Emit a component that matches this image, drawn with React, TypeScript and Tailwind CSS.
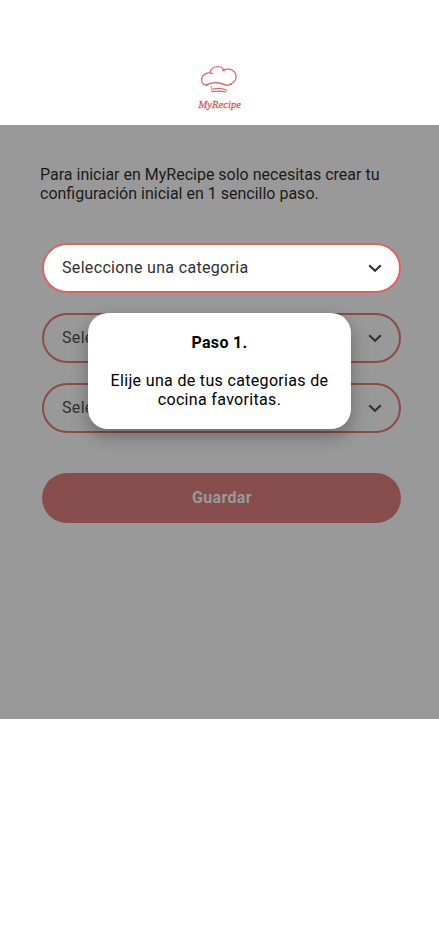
const roboto = "font-['Roboto',sans-serif]";

function Logo() {
  return (
    <svg className="overflow-visible" width="46" height="50" viewBox="0 0 46 50" fill="none" stroke="#df6a6c" strokeLinecap="round" strokeLinejoin="round">
      <path strokeWidth="1.3" d="M15.6 8.6C10.2 6.4 5 9.6 4.6 14.4C4.4 18.4 7.2 20.6 10.4 20" />
      <path strokeWidth="1.2" d="M13.2 7.4C13.6 3.4 17.4 1.4 21 1.5C24.4 1.7 26.6 3.4 27.2 6" />
      <path strokeWidth="1.3" d="M25.6 5.4C29.4 3.4 34.4 3.8 37 6.6C41 11 39 17.4 33 19.2" />
      <path strokeWidth="1.5" d="M9.4 20C14 17 21.6 17.4 26.4 19.2C29.4 20.4 32 20.8 34.4 19" />
      <path strokeWidth="0.9" d="M14 21C14.8 22.6 14.4 24.4 15 26.4" />
      <path strokeWidth="1.2" d="M16 24.1C20.4 22.9 26 23.3 29.6 25.2M15.2 26.6C20 25.8 25 26 28.8 27" />
      <text x="1.5" y="42.6" textLength="42.5" lengthAdjust="spacingAndGlyphs" fill="#d9595c" stroke="#d9595c" strokeWidth="0.3" fontFamily="'Liberation Serif', serif" fontStyle="italic" fontSize="11">MyRecipe</text>
    </svg>
  );
}

function CategorySelect({ active = false }: { active?: boolean }) {
  return (
    <button
      type="button"
      className={`flex h-[50px] w-full items-center justify-between rounded-full border-2 pr-[17px] pl-[18px] text-left text-base tracking-[0.33px] ${
        active ? "border-[#de6364] bg-white text-[#313131]" : "border-[#8b4a4b] text-[#313131]"
      }`}
    >
      <span>Seleccione una categoria</span>
      <svg width="14" height="10" viewBox="0 0 14 10" fill="none" stroke="#333" strokeWidth="2.2">
        <path d="M1.2 2.3L7 7.8L12.8 2.3" />
      </svg>
    </button>
  );
}

export default function App() {
  return (
    <div className={`min-h-[926px] bg-white ${roboto}`}>
      <header className="flex h-[125px] justify-center pt-[65px]">
        <Logo />
      </header>
      <main className="relative h-[594px] bg-[#999] pt-10 pr-[38px] pl-[42px]">
        <p className="-ml-0.5 text-base leading-[19px] whitespace-nowrap text-[#1b1b1b]">
          Para iniciar en MyRecipe solo necesitas crear tu
          <br />
          configuración inicial en 1 sencillo paso.
        </p>
        <div className="mt-10 flex flex-col gap-5">
          <CategorySelect active />
          <CategorySelect />
          <CategorySelect />
        </div>
        <button type="button" className="mt-10 h-[50px] w-full rounded-full bg-[#874d4c] pl-px text-base font-bold tracking-[0.33px] text-[#999]">
          Guardar
        </button>
        <div role="dialog" className="absolute top-[188px] left-[88px] h-[116px] w-[263px] rounded-[20px] bg-white pt-5 text-center text-base leading-[19px] tracking-[0.33px] text-black shadow-[0_7px_18px_rgba(0,0,0,0.3)]">
          <h2 className="font-bold">Paso 1.</h2>
          <p className="mt-[19px]">
            Elije una de tus categorias de
            <br />
            cocina favoritas.
          </p>
        </div>
      </main>
    </div>
  );
}
